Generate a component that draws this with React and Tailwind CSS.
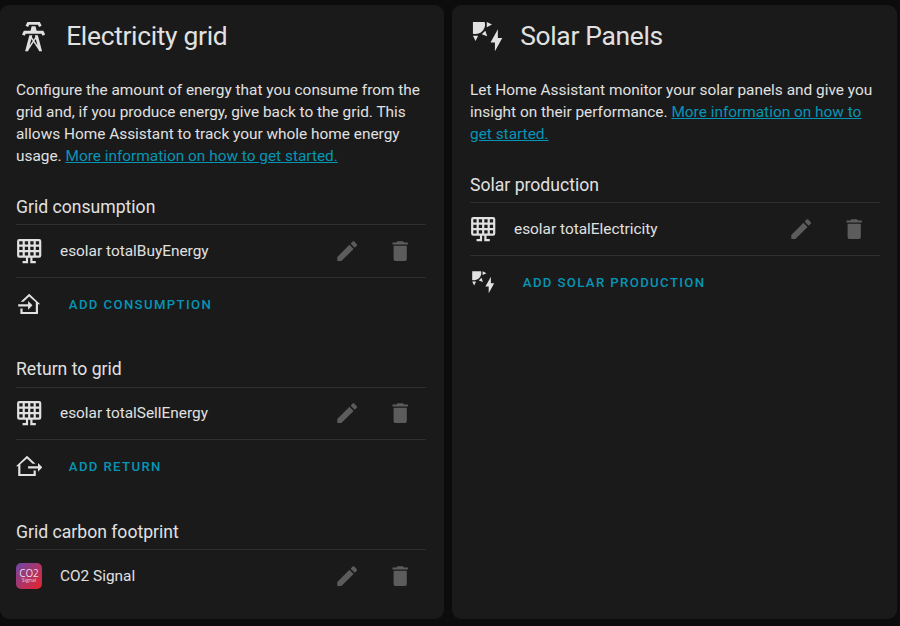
const paths = {
  tower:
    "M8.28,5.45L6.5,4.55L7.76,2H16.23L17.5,4.55L15.72,5.44L15,4H9L8.28,5.45M18.62,8H14.09L13.3,5H10.7L9.91,8H5.38L4.1,10.55L5.89,11.44L6.62,10H17.38L18.1,11.45L19.89,10.56L18.62,8M17.77,22H15.7L15.46,21.1L12,15.9L8.53,21.1L8.3,22H6.23L9.12,11H11.19L10.83,12.35L12,14.1L13.16,12.35L12.81,11H14.88L17.77,22M11.4,15L10.5,13.65L9.32,18.13L11.4,15M14.68,18.12L13.5,13.64L12.6,15L14.68,18.12Z",
  solar:
    "M11.45,2V5.55L15,3.77L11.45,2M10.45,8L8,10.46L11.75,11.71L10.45,8M2,11.45L3.77,15L5.55,11.45H2M10,2H2V10C2.57,10.17 3.17,10.25 3.77,10.25C7.35,10.26 10.26,7.35 10.27,3.75C10.26,3.16 10.17,2.57 10,2M17,22V16H14L19,7V13H22L17,22Z",
  homeImport:
    "M15 13L11 17V14H2V12H11V9L15 13M4 21V16H6V19H18V10.3L12 4.9L6.8 9.7H4.2L12 2.6L22 12H20V21Z",
  homeExport:
    "M24 13L20 17V14H11V12H20V9L24 13M2 21V12H0L10 2.6L17.7 9.7H15.1L10 4.9L4 10.3V19H16V16H18V21Z",
  pencil:
    "M20.71,7.04C21.1,6.65 21.1,6 20.71,5.63L18.37,3.29C18,2.9 17.35,2.9 16.96,3.29L15.12,5.12L18.87,8.87M3,17.25V21H6.75L17.81,9.93L14.06,6.18L3,17.25Z",
  trash:
    "M19,4H15.5L14.5,3H9.5L8.5,4H5V6H19M6,19A2,2 0 0,0 8,21H16A2,2 0 0,0 18,19V7H6V19Z",
  panel:
    "M3 1H21A2 2 0 0 1 23 3V16A2 2 0 0 1 21 18H15V21H18V23H13V18H11V23H6V21H9V18H3A2 2 0 0 1 1 16V3A2 2 0 0 1 3 1M3 3V6H6V3ZM8 3V6H11V3ZM13 3V6H16V3ZM18 3V6H21V3ZM3 8V11H6V8ZM8 8V11H11V8ZM13 8V11H16V8ZM18 8V11H21V8ZM3 13V16H6V13ZM8 13V16H11V13ZM13 13V16H16V13ZM18 13V16H21V13Z",
};

function Icon({ name, className }) {
  return (
    <svg viewBox="0 0 24 24" fill="currentColor" fillRule="evenodd" className={`shrink-0 ${className}`}>
      <path d={paths[name]} />
    </svg>
  );
}

function Card({ icon, title, padding, children }) {
  return (
    <section className={`h-[614px] rounded-[9px] bg-[#1a1a1a] ${padding}`}>
      <h1 className="flex h-[64px] items-center gap-[15px] text-[26.4px] leading-none tracking-[-0.012em]">
        <Icon name={icon} className="size-[35.2px]" />
        <span className="pb-[2px]">{title}</span>
      </h1>
      {children}
    </section>
  );
}

function Link({ children }) {
  return (
    <a href="#" className="text-[#0595b6] underline">
      {children}
    </a>
  );
}

function Heading({ className = "pt-[2px]", children }) {
  return <h2 className={`flex h-[35px] items-center text-[17.6px] leading-none ${className}`}>{children}</h2>;
}

function Row({ icon, label, className = "h-[54px] border-b", labelClass = "" }) {
  return (
    <div className={`flex items-center border-t border-[#2f2f2f] ${className}`}>
      {icon}
      <span className={`ml-[17.6px] flex-1 ${labelClass}`}>{label}</span>
      <button className="text-[#5c5c5c]">
        <Icon name="pencil" className="size-[26.4px]" />
      </button>
      <button className="ml-[26.6px] mr-[12.8px] text-[#5c5c5c]">
        <Icon name="trash" className="size-[26.4px]" />
      </button>
    </div>
  );
}

function AddRow({ icon, label }) {
  return (
    <div className="flex h-[53px] items-center">
      <Icon name={icon} className="size-[26.4px]" />
      <button className="ml-[26.4px] text-[13.2px] font-medium tracking-[1.36px] text-[#0595b6]">{label}</button>
    </div>
  );
}

function Co2Logo() {
  return (
    <svg viewBox="0 0 26 26" className="mr-[0.4px] size-[26px] shrink-0">
      <defs>
        <linearGradient id="co2" x1="0" y1="0" x2="1" y2="1">
          <stop offset="0" stopColor="#6b48a8" />
          <stop offset="0.5" stopColor="#ac3468" />
          <stop offset="1" stopColor="#e8232a" />
        </linearGradient>
      </defs>
      <rect width="26" height="26" rx="5" fill="url(#co2)" />
      <text x="13" y="14" textAnchor="middle" fontSize="10.5" textLength="19.5" lengthAdjust="spacingAndGlyphs" fill="#eadbe5" fontFamily="Open Sans, sans-serif">
        CO2
      </text>
      <text x="13" y="19" textAnchor="middle" fontSize="5.6" textLength="14.5" lengthAdjust="spacingAndGlyphs" fill="#ecc6d6" fontFamily="Open Sans, sans-serif">
        Signal
      </text>
    </svg>
  );
}

const panel = <Icon name="panel" className="size-[26.4px]" />;

export default function App() {
  return (
    <main className="grid h-[626px] w-[900px] grid-cols-[444px_445px] gap-x-2 overflow-hidden bg-[#0c0c0c] pt-[5px] font-['Roboto',sans-serif] text-[15.4px] leading-[22px] text-[#e1e1e1]">
      <Card icon="tower" title="Electricity grid" padding="pl-4 pr-[18px]">
        <p className="mt-[10px] whitespace-nowrap">
          Configure the amount of energy that you consume from the
          <br />
          grid and, if you produce energy, give back to the grid. This
          <br />
          allows Home Assistant to track your whole home energy
          <br />
          usage. <Link>More information on how to get started.</Link>
        </p>
        <div className="mt-[22px]">
          <Heading>Grid consumption</Heading>
          <Row icon={panel} label="esolar totalBuyEnergy" />
          <AddRow icon="homeImport" label="ADD CONSUMPTION" />
        </div>
        <div className="mt-[21px]">
          <Heading className="pt-0">Return to grid</Heading>
          <Row icon={panel} label="esolar totalSellEnergy" className="h-[53px] border-b" labelClass="pb-px" />
          <AddRow icon="homeExport" label="ADD RETURN" />
        </div>
        <div className="mt-[21px]">
          <Heading>Grid carbon footprint</Heading>
          <Row icon={<Co2Logo />} label="CO2 Signal" className="h-[53px]" />
        </div>
      </Card>
      <Card icon="solar" title="Solar Panels" padding="pl-[18px] pr-[17px]">
        <p className="mt-[10px] whitespace-nowrap">
          Let Home Assistant monitor your solar panels and give you
          <br />
          insight on their performance. <Link>More information on how to</Link>
          <br />
          <Link>get started.</Link>
        </p>
        <div className="mt-[22px]">
          <Heading>Solar production</Heading>
          <Row icon={panel} label="esolar totalElectricity" />
          <AddRow icon="solar" label="ADD SOLAR PRODUCTION" />
        </div>
      </Card>
    </main>
  );
}
